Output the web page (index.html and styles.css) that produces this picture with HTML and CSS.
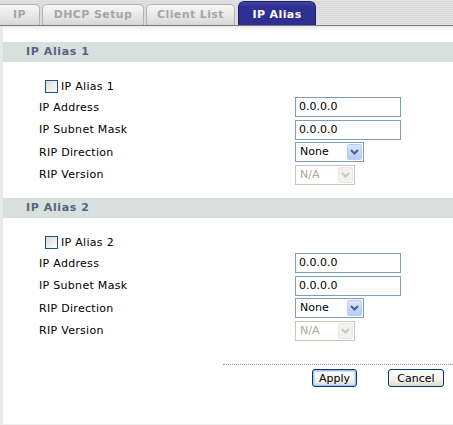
FILE: index.html
```html
<!DOCTYPE html>
<html>
<head>
<meta charset="utf-8">
<link rel="stylesheet" href="styles.css">
</head>
<body>
<div class="tabbar">
  <div class="tab tab-ip">IP</div>
  <div class="tab tab-dhcp">DHCP Setup</div>
  <div class="tab tab-client">Client List</div>
  <div class="tab tab-alias active">IP Alias</div>
</div>
<div class="page">
  <section class="group">
    <div class="group-title">IP Alias 1</div>
    <label class="check-row"><span class="checkbox"></span><span>IP Alias 1</span></label>
    <div class="form">
      <div class="row"><span class="label">IP Address</span><div class="field">0.0.0.0</div></div>
      <div class="row"><span class="label">IP Subnet Mask</span><div class="field">0.0.0.0</div></div>
      <div class="row"><span class="label">RIP Direction</span><div class="select"><span class="sel-text">None</span><span class="arrow"><svg width="9" height="6" viewBox="0 0 9 6"><path d="M1 1 L4.5 4.5 L8 1" fill="none" stroke="currentColor" stroke-width="2"/></svg></span></div></div>
      <div class="row"><span class="label">RIP Version</span><div class="select disabled"><span class="sel-text">N/A</span><span class="arrow"><svg width="9" height="6" viewBox="0 0 9 6"><path d="M1 1 L4.5 4.5 L8 1" fill="none" stroke="currentColor" stroke-width="2"/></svg></span></div></div>
    </div>
  </section>
  <section class="group">
    <div class="group-title">IP Alias 2</div>
    <label class="check-row"><span class="checkbox"></span><span>IP Alias 2</span></label>
    <div class="form">
      <div class="row"><span class="label">IP Address</span><div class="field">0.0.0.0</div></div>
      <div class="row"><span class="label">IP Subnet Mask</span><div class="field">0.0.0.0</div></div>
      <div class="row"><span class="label">RIP Direction</span><div class="select"><span class="sel-text">None</span><span class="arrow"><svg width="9" height="6" viewBox="0 0 9 6"><path d="M1 1 L4.5 4.5 L8 1" fill="none" stroke="currentColor" stroke-width="2"/></svg></span></div></div>
      <div class="row"><span class="label">RIP Version</span><div class="select disabled"><span class="sel-text">N/A</span><span class="arrow"><svg width="9" height="6" viewBox="0 0 9 6"><path d="M1 1 L4.5 4.5 L8 1" fill="none" stroke="currentColor" stroke-width="2"/></svg></span></div></div>
    </div>
  </section>
  <div class="footer">
    <div class="buttons">
      <button class="btn default">Apply</button>
      <button class="btn">Cancel</button>
    </div>
  </div>
</div>
</body>
</html>
```
FILE: styles.css
```css
* { box-sizing: border-box; }
html, body { margin: 0; padding: 0; background: #fff; }
body {
  font-family: "DejaVu Sans", Verdana, sans-serif;
  font-size: 11px;
  color: #000;
  width: 453px;
  height: 425px;
  overflow: hidden;
}

/* tab bar */
.tabbar {
  height: 26px;
  display: flex;
  align-items: flex-end;
  background: repeating-linear-gradient(to bottom, #e2e2e2 0 1px, #d9d9d9 1px 2px);
  border-bottom: 1px solid #7b7b7b;
}
.tab {
  height: 21px;
  margin-right: 2px;
  border: 1px solid #b3b3b3;
  border-bottom: none;
  border-radius: 5px 5px 0 0;
  background: linear-gradient(to bottom, #f7f7f7, #e6e6e6 60%, #d6d6d6);
  color: #a6a6a6;
  font-weight: bold;
  font-size: 11px;
  letter-spacing: 0.4px;
  display: flex;
  align-items: center;
  justify-content: center;
  padding-bottom: 1px;
}
.tab-ip { width: 40px; border-left: none; border-radius: 0 5px 0 0; }
.tab-dhcp { width: 102px; }
.tab-client { width: 89px; margin-right: 3px; }
.tab-alias { width: 78px; }
.tab.active {
  height: 24px;
  background: linear-gradient(to bottom, #4446a8, #2e3094 20%, #2c2e90);
  border: 1px solid #1d1f6c;
  border-bottom: none;
  border-radius: 6px 6px 0 0;
  color: #fff;
  padding-top: 2px;
}

/* page */
.page {
  height: 399px;
  border-left: 3px solid #e9e9e9;
  border-bottom: 1px solid #ededed;
  padding-top: 16px;
  background: linear-gradient(to bottom, #ececec, #fff 5px) no-repeat;
}
.group { padding-bottom: 12px; }
.group-title {
  height: 20px;
  line-height: 20px;
  padding-left: 23px;
  background: #d8e0de;
  color: #5a6183;
  font-weight: bold;
  letter-spacing: 0.6px;
}
.check-row {
  margin-top: 14px;
  height: 20px;
  display: flex;
  align-items: center;
  padding-left: 42px;
  gap: 3px;
  letter-spacing: 0.3px;
}
.checkbox {
  width: 13px;
  height: 13px;
  border: 1px solid #1c5180;
  background: linear-gradient(135deg, #dcdcd7, #fbfbfa);
}
.row {
  height: 22.5px;
  display: grid;
  grid-template-columns: 256px auto;
  align-items: center;
  padding-left: 36px;
}
.label { letter-spacing: 0.3px; }
.field {
  width: 106px;
  height: 20px;
  border: 1px solid #7f9db9;
  padding-left: 3px;
  line-height: 18px;
}
.select {
  width: 69px;
  height: 20px;
  border: 1px solid #7f9db9;
  display: flex;
  align-items: stretch;
  justify-content: space-between;
  padding: 1px;
}
.sel-text { padding-left: 3px; line-height: 16px; }
.arrow {
  width: 15px;
  border: 1px solid #b9cbf3;
  border-radius: 2px;
  background: linear-gradient(to bottom, #dce6fd, #b6cbfa);
  color: #4d6185;
  display: flex;
  align-items: center;
  justify-content: center;
}
.select.disabled {
  width: 60px;
  border-color: #c9c7ba;
  color: #aca899;
}
.select.disabled .arrow {
  border-color: #e8e8e2;
  background: #f2f2ee;
  color: #c9c7ba;
}

/* footer */
.footer {
  margin-top: 10px;
  margin-left: 220px;
  border-top: 1px dotted #9a9a9a;
  padding-top: 4px;
}
.buttons {
  display: flex;
  justify-content: flex-end;
  gap: 31px;
  padding-right: 9px;
}
.btn {
  font-family: "DejaVu Sans", Verdana, sans-serif;
  font-size: 11px;
  color: #000;
  height: 18px;
  padding: 0;
  border: 1px solid #003c74;
  border-radius: 3px;
  background: linear-gradient(to bottom, #ffffff, #f0efe8 70%, #dcd9cc);
  line-height: 15px;
}
.btn.default {
  width: 45px;
  box-shadow: inset 0 0 0 1px #a9c2f0, inset 0 0 0 2px #cfdcf8;
}
.btn:not(.default) { width: 56px; }
```
